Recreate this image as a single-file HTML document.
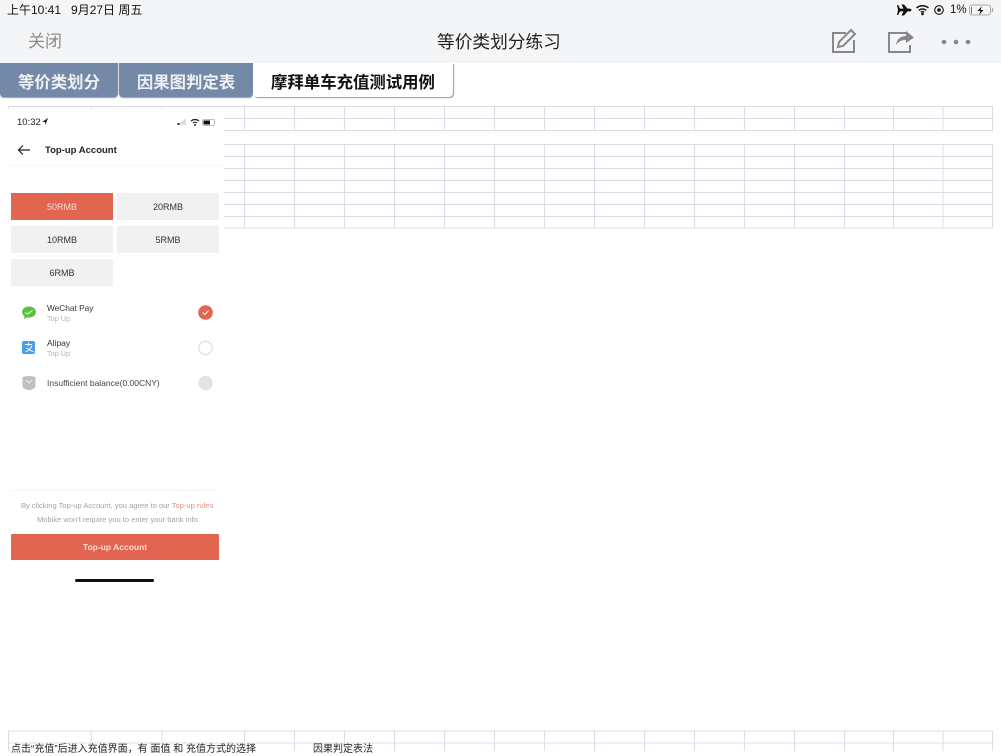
<!DOCTYPE html>
<html><head><meta charset="utf-8">
<style>
html,body{margin:0;padding:0;background:#fff}
body{width:1001px;height:751px;overflow:hidden;position:relative;font-family:"Liberation Sans","Noto Sans CJK SC",sans-serif;color:#111}
.a{position:absolute;white-space:nowrap}
.tab{position:absolute;top:63px;height:34px;line-height:41px;text-align:center;font-size:16.4px;font-weight:700;box-sizing:border-box}
.btn{position:absolute;width:102px;height:27px;line-height:28px;text-align:center;background:#f1f1f1;font-size:9px;color:#333}
</style></head><body>
<div class="a" style="left:0;top:0;width:1001px;height:63px;background:#f4f5f7"></div>
<div class="a" style="left:7px;top:3px;font-size:12px;line-height:14px">上午10:41&nbsp;&nbsp; 9月27日 周五</div>
<div class="a" style="left:28px;top:32px;font-size:17px;line-height:20px;color:#8b8b8b">关闭</div>
<div class="a" style="left:437px;top:32px;font-size:17.7px;line-height:20px;color:#222">等价类划分练习</div>
<svg class="a" style="left:890px;top:0" width="111" height="20" viewBox="0 0 111 20">
<path d="M7 5 H8.200 L10 8.600 H13.500 L11.500 4.500 H14 L17.500 8.600 H19.500 C21 8.600 21.500 9.500 21.500 10 C21.500 10.500 21 11.400 19.500 11.400 H17.500 L14 15.500 H11.500 L13.500 11.400 H10 L8.200 15 H7 L8 10Z" fill="#111"/>
<path d="M26.500 8 a9 9 0 0 1 12 0 M28.800 10.300 a5.800 5.800 0 0 1 7.400 0 M30.800 12.300 a2.800 2.800 0 0 1 3.400 0" fill="none" stroke="#111" stroke-width="1.500"/><circle cx="32.500" cy="14" r="1.300" fill="#111"/>
<circle cx="49" cy="10" r="4.300" fill="none" stroke="#111" stroke-width="1.100"/><circle cx="49" cy="10" r="1.800" fill="#111"/>
<rect x="79.500" y="5" width="21" height="10" rx="2.500" fill="none" stroke="#aaa"/><rect x="81" y="7" width="1" height="6.500" fill="#e33"/><path d="M92 6 L87.500 11 H90.500 L89 15 L93.500 10 H90.500Z" fill="#111"/><rect x="101.800" y="8" width="1.300" height="4" fill="#aaa"/>
</svg>
<div class="a" style="left:950px;top:3px;font-size:11.500px;line-height:14px">1%</div>
<svg class="a" style="left:825px;top:25px" width="160" height="32" viewBox="0 0 160 32" fill="none" stroke="#87888b" stroke-width="2">
<path d="M21 8 H8 V27 H29 V15"/><path d="M13 22 L14 17 L26 5 L30 9 L18 21Z"/>
<path d="M82 8 H64 V27 H85 V20"/><path d="M71 20 C72 13 77 11 81 11 V6 L89 12.500 L81 18 V15 C77 15 74 16 71 20Z" fill="#87888b" stroke="none"/>
<g fill="#87888b" stroke="none"><circle cx="119" cy="17" r="2.300"/><circle cx="131" cy="17" r="2.300"/><circle cx="143" cy="17" r="2.300"/></g>
</svg>
<div class="tab" style="left:0;width:118px;background:#7488a8;color:#eef0f4;border-radius:0 0 4px 4px;box-shadow:0 1px 1px #999">等价类划分</div>
<div class="tab" style="left:119px;width:134px;background:#7488a8;color:#eef0f4;border-radius:0 0 4px 4px;box-shadow:0 1px 1px #999">因果图判定表</div>
<div class="tab" style="left:253px;width:200px;background:#fff;color:#111;border-radius:0 0 4px 4px;box-shadow:1px 1px 1px #999">摩拜单车充值测试用例</div>
<svg class="a" style="left:0;top:0" width="1001" height="751" fill="none" stroke="#dcdce8" stroke-width="1">
<path d="M8 106.500H992.500M8 118.500H992.500M8 130.500H992.500M8 144.500H992.500M8 156.500H992.500M8 168.500H992.500M8 180.500H992.500M8 192.500H992.500M8 204.500H992.500M8 216.500H992.500M8 228H992.500M8 731H992.500M8 743H992.500"/>
<path d="M8.500 106V131M91 106V131M162 106V131M244.500 106V131M294.500 106V131M344.500 106V131M394.500 106V131M444.500 106V131M494.500 106V131M544.500 106V131M594.500 106V131M644.500 106V131M694.500 106V131M744.500 106V131M794.500 106V131M844.500 106V131M893.500 106V131M943 106V131M992.500 106V131"/>
<path d="M8.500 144V228M91 144V228M162 144V228M244.500 144V228M294.500 144V228M344.500 144V228M394.500 144V228M444.500 144V228M494.500 144V228M544.500 144V228M594.500 144V228M644.500 144V228M694.500 144V228M744.500 144V228M794.500 144V228M844.500 144V228M893.500 144V228M943 144V228M992.500 144V228"/>
<path d="M8.500 731V751M91 731V751M162 731V751M244.500 731V751M294.500 731V751M344.500 731V751M394.500 731V751M444.500 731V751M494.500 731V751M544.500 731V751M594.500 731V751M644.500 731V751M694.500 731V751M744.500 731V751M794.500 731V751M844.500 731V751M893.500 731V751M943 731V751M992.500 731V751"/>
</svg>
<div class="a" style="left:11px;top:743px;font-size:10px;line-height:13px;color:#222">点击“充值”后进入充值界面，有 面值 和 充值方式的选择</div>
<div class="a" style="left:313px;top:743px;font-size:10px;line-height:13px;color:#222">因果判定表法</div>
<div class="a" style="left:0;top:109px;width:224px;height:480px;background:#fff"></div>
<div class="a" style="left:5px;top:165px;width:219px;height:1px;background:#f8f8f8"></div>
<div class="a" style="left:17px;top:117px;font-size:9.500px;line-height:12px;color:#222">10:32</div>
<svg class="a" style="left:42px;top:118px" width="6" height="8" viewBox="0 0 6 8"><path d="M0 4 L6 0 L3.500 7 L3 4Z" fill="#222"/></svg>
<svg class="a" style="left:176px;top:117px" width="42" height="11" viewBox="0 0 42 11">
<rect x="1.500" y="6" width="2" height="2" fill="#222"/><rect x="4.500" y="5" width="1" height="3" fill="#bbb"/><rect x="6.500" y="3.500" width="1" height="4.500" fill="#bbb"/><rect x="8.500" y="2" width="1" height="6" fill="#bbb"/>
<path d="M15 4 a6 6 0 0 1 8 0 M17 6 a3 3 0 0 1 4 0" fill="none" stroke="#222" stroke-width="1.200"/><circle cx="19" cy="8" r="1" fill="#222"/>
<rect x="26.500" y="2.500" width="12" height="6" rx="1.500" fill="none" stroke="#aaa" stroke-width=".7"/><rect x="27.500" y="3.500" width="6.500" height="4" fill="#111"/>
</svg>
<svg class="a" style="left:17px;top:144px" width="14" height="12" viewBox="0 0 14 12"><path d="M13 6H1.500M6 1.500L1.500 6L6 10.500" fill="none" stroke="#222" stroke-width="1.200"/></svg>
<div class="a" style="left:45px;top:144px;font-size:9.500px;line-height:13px;font-weight:700;color:#222">Top-up Account</div>
<div class="btn" style="left:11px;top:193px;background:#e16551;color:#fbd9d2">50RMB</div>
<div class="btn" style="left:117px;top:193px">20RMB</div>
<div class="btn" style="left:11px;top:226px">10RMB</div>
<div class="btn" style="left:117px;top:226px">5RMB</div>
<div class="btn" style="left:11px;top:259px">6RMB</div>
<svg class="a" style="left:20px;top:304px" width="200" height="90" viewBox="0 0 200 90">
<ellipse cx="9" cy="8" rx="7" ry="5.500" fill="#5cc041"/><path d="M4.500 12 L4 15 L8 13Z" fill="#5cc041"/><path d="M5 8.500 L7.500 10 L12.500 6.500" fill="none" stroke="#fff"/>
<rect x="2" y="37" width="13" height="13" rx="2" fill="#4a9ee6"/><path d="M5 40.500H12M8.500 38.500V42M5 48C9 47 11 44 12 41.500M6 44C9 45 11 47 14 48" fill="none" stroke="#fff" stroke-width=".9"/>
<path d="M2.500 73 Q9 71 15.500 73 V83 Q9 89 2.500 83Z" fill="#c0c0c4"/><path d="M6 76 L9 79 L12 76" fill="none" stroke="#eee"/>
<circle cx="185.500" cy="8.500" r="7.300" fill="#e16551"/><path d="M182.500 8.500 L184.800 10.500 L188.500 6.700" fill="none" stroke="#fff"/>
<circle cx="185.500" cy="44" r="6.700" fill="#fff" stroke="#d8d8d8"/>
<circle cx="185.500" cy="79" r="7.200" fill="#e3e3e3"/>
</svg>
<div class="a" style="left:47px;top:303px;font-size:8.300px;line-height:10px;color:#333">WeChat Pay</div>
<div class="a" style="left:47px;top:314px;font-size:7.300px;line-height:9px;color:#b5b5b5">Top Up</div>
<div class="a" style="left:47px;top:338px;font-size:8.500px;line-height:10px;color:#333">Alipay</div>
<div class="a" style="left:47px;top:349px;font-size:7.300px;line-height:9px;color:#b5b5b5">Top Up</div>
<div class="a" style="left:47px;top:378px;font-size:8.500px;line-height:10px;color:#444">Insufficient balance(0.00CNY)</div>
<div class="a" style="left:11px;top:490px;width:208px;height:1px;background:#f6f6f6"></div>
<div class="a" style="left:21px;top:501px;font-size:7.550px;line-height:9px;color:#a3a3a3">By clicking Top-up Account, you agree to our <span style="color:#e58a7a">Top-up rules</span></div>
<div class="a" style="left:37px;top:515px;font-size:7.550px;line-height:9px;color:#a3a3a3">Mobike won't require you to enter your bank info</div>
<div class="a" style="left:11px;top:534px;width:208px;height:26px;line-height:27px;background:#e16551;color:#fbdcd5;font-size:8.500px;font-weight:700;text-align:center;border-radius:1px">Top-up Account</div>
<div class="a" style="left:75px;top:579px;width:79px;height:3px;background:#111;border-radius:2px"></div>
</body></html>
